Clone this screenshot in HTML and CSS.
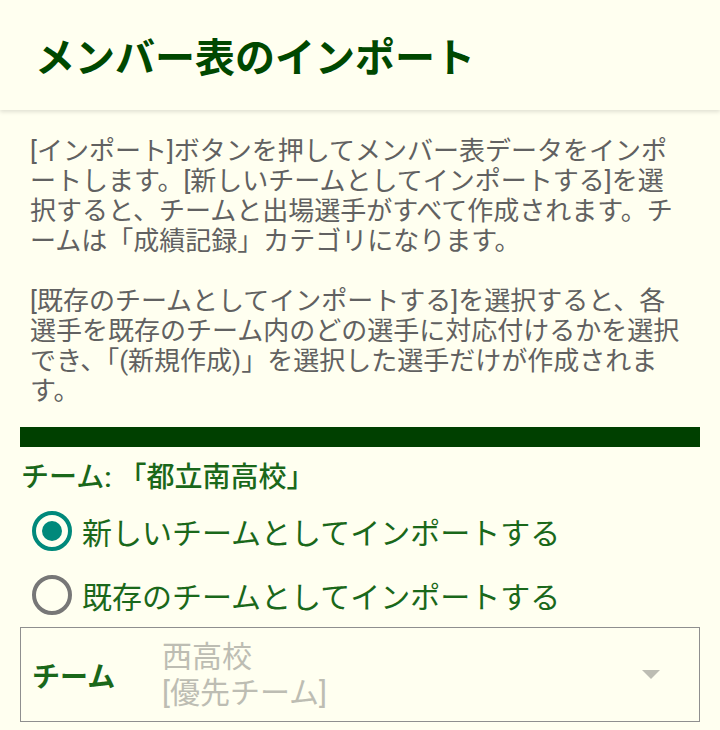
FILE: index.html
```html
<!DOCTYPE html>
<html lang="ja">
<head>
    <meta charset="UTF-8">
    <meta name="viewport" content="width=device-width, initial-scale=1.0">
    <title>メンバー表のインポート</title>
    <link rel="stylesheet" href="styles.css">
</head>
<body>

<header class="toolbar">
    <h1>メンバー表のインポート</h1>
</header>

<div class="desc">
    <p>[インポート]ボタンを押してメンバー表データをインポートします。[新しいチームとしてインポートする]を選択すると、チームと出場選手がすべて作成されます。チームは「成績記録」カテゴリになります。</p>
    <p class="second">[既存のチームとしてインポートする]を選択すると、各選手を既存のチーム内のどの選手に対応付けるかを選択でき、「(新規作成)」を選択した選手だけが作成されます。</p>
</div>

<div class="bar"></div>

<div class="team-title">チーム: 「都立南高校」</div>

<label class="radio-row">
    <span class="radio checked"></span>
    <span>新しいチームとしてインポートする</span>
</label>
<label class="radio-row">
    <span class="radio"></span>
    <span>既存のチームとしてインポートする</span>
</label>

<div class="spinner">
    <span class="spinner-label">チーム</span>
    <span class="spinner-value">西高校<br>[優先チーム]</span>
    <span class="arrow"></span>
</div>

</body>
</html>
```

FILE: styles.css
```css
body {
    margin: 0;
    font-family: Roboto, "Noto Sans CJK JP", sans-serif;
    background-color: #fffff0;
    color: #1a681a;
}
.toolbar {
    height: 110px;
    display: flex;
    align-items: center;
    padding-left: 35px;
    background-color: #fffff0;
    box-shadow: 0 2px 4px rgba(0, 0, 0, 0.12);
}
.toolbar h1 {
    margin: 0;
    font-size: 40px;
    font-weight: bold;
    color: #004800;
}
.desc {
    padding: 0 35px 0 30px;
    margin-top: 26px;
    color: #616161;
    font-size: 26px;
    line-height: 30px;
}
.desc p {
    margin: 0;
}
.desc p.second {
    margin-top: 30px;
}
.bar {
    height: 20px;
    margin: 21px 20px 0;
    background-color: #004000;
}
.team-title {
    margin: 13px 0 3px 21px;
    font-size: 28px;
    line-height: 36px;
    font-weight: 500;
}
.radio-row {
    display: flex;
    align-items: center;
    gap: 10px;
    height: 64px;
    padding-left: 32px;
    font-size: 30px;
}
.radio {
    width: 40px;
    height: 40px;
    box-sizing: border-box;
    border: 4px solid #777;
    border-radius: 50%;
    display: flex;
    align-items: center;
    justify-content: center;
}
.radio.checked {
    border-color: #00897b;
}
.radio.checked::after {
    content: "";
    width: 20px;
    height: 20px;
    border-radius: 50%;
    background-color: #00897b;
}
.spinner {
    display: flex;
    align-items: center;
    height: 95px;
    box-sizing: border-box;
    margin: 0 20px;
    padding: 0 39px 0 11px;
    border: 1px solid #8f8f8f;
}
.spinner-label {
    font-size: 28px;
    font-weight: bold;
    width: 130px;
}
.spinner-value {
    flex: 1;
    font-size: 30px;
    line-height: 36px;
    color: #bdbdb3;
}
.arrow {
    width: 0;
    height: 0;
    border-left: 9px solid transparent;
    border-right: 9px solid transparent;
    border-top: 9px solid #bdbdb3;
}
```
